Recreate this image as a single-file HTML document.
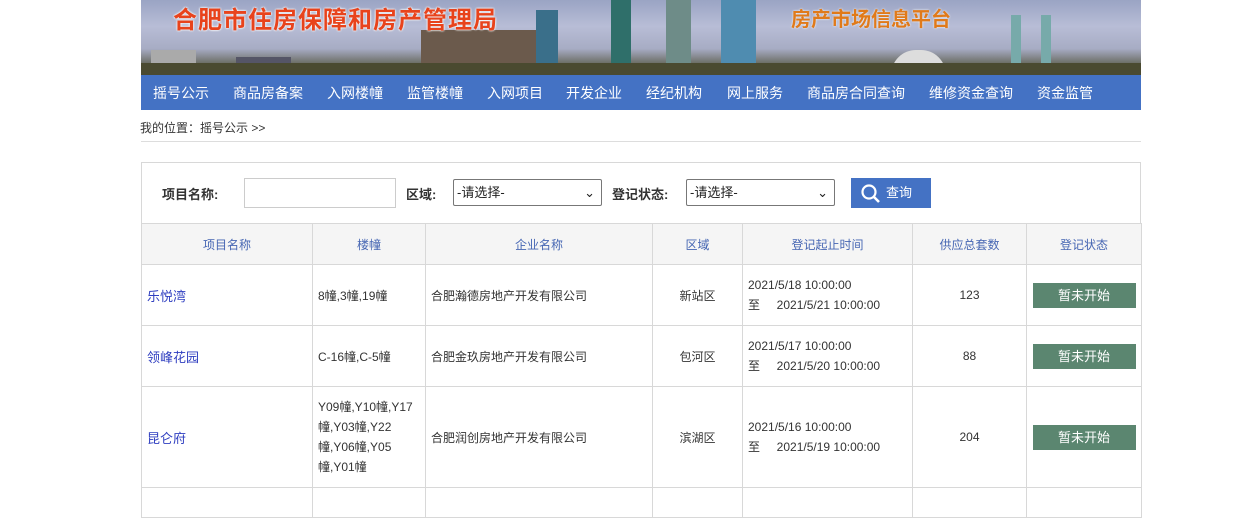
<!DOCTYPE html>
<html><head><meta charset="utf-8"><style>
body{margin:0;background:#fff;font-family:"Liberation Sans","Noto Sans CJK SC",sans-serif;font-size:12px;color:#333;overflow:hidden;height:498px}
.w{position:absolute;left:141px;width:1000px;}
.banner{top:0;height:75px;background:linear-gradient(180deg,#9aa4c4 0%,#b8bdd6 35%,#a7acc4 65%,#6a6c62 85%,#4b4a38 100%);overflow:hidden}
.b{position:absolute;bottom:0;background:#5a7fa0}
.t1{position:absolute;left:32px;top:0;font-size:24px;font-weight:bold;color:#e8431c;letter-spacing:1px;text-shadow:0 0 2px #fff,0 0 2px #fff}
.t2{position:absolute;left:650px;top:3px;font-size:20px;font-weight:bold;color:#e07a1a;text-shadow:0 0 2px #fff}
.nav{top:75px;height:35px;background:#4472c4;color:#fff;font-size:14px}
.nav span{position:absolute;top:8px}
.bc{top:119px;font-size:12px;color:#333;left:140px}
.line{top:141px;height:1px;background:#ddd}
.box{top:162px;height:60px;border:1px solid #d8d8d8;border-bottom:none;width:998px}
table{position:absolute;left:141px;top:223px;border-collapse:collapse;width:1000px;table-layout:fixed}
td,th{border:1px solid #d8d8d8;padding:0 5px}
th{background:#f5f5f5;color:#4666b3;font-weight:normal;height:40px;font-size:12px}
td{font-size:12px;color:#333}
.btn{display:block;margin:0 auto;width:103px;height:25px;line-height:25px;background:#5b8670;color:#fff;text-align:center;font-size:13px}
a{color:#2f3ec0;text-decoration:none;font-size:13px}
.sel{position:absolute;top:16px;width:144px;height:25px;border:1px solid #777;border-radius:2px;font-size:13px;line-height:25px;padding-left:3px;color:#222}
</style></head><body>
<div class="w banner">
<div class="b" style="left:10px;width:45px;height:25px;background:#aaa"></div>
<div class="b" style="left:95px;width:55px;height:18px;background:#556"></div>
<div class="b" style="left:280px;width:120px;height:45px;background:#6b5a4c"></div>
<div class="b" style="left:395px;width:22px;height:65px;background:#3a6f8a"></div>
<div class="b" style="left:470px;width:20px;height:75px;background:#2f6f6a"></div>
<div class="b" style="left:525px;width:25px;height:75px;background:#6e8c88"></div>
<div class="b" style="left:580px;width:35px;height:75px;background:#4f8cb0"></div>
<div class="b" style="left:750px;width:55px;height:25px;background:#ddd;border-radius:30px 30px 0 0"></div>
<div class="b" style="left:870px;width:10px;height:60px;background:#7aa"></div>
<div class="b" style="left:900px;width:10px;height:60px;background:#7aa"></div>
<div class="b" style="left:0;width:1000px;height:12px;background:#4a4a30"></div>
<div class="t1">合肥市住房保障和房产管理局</div>
<div class="t2">房产市场信息平台</div>
</div>
<div class="w nav">
<span style="left:12px">摇号公示</span><span style="left:92px">商品房备案</span><span style="left:186px">入网楼幢</span><span style="left:266px">监管楼幢</span><span style="left:346px">入网项目</span><span style="left:425px">开发企业</span><span style="left:505px">经纪机构</span><span style="left:586px">网上服务</span><span style="left:666px">商品房合同查询</span><span style="left:788px">维修资金查询</span><span style="left:896px">资金监管</span>
</div>
<div class="w bc">我的位置：摇号公示 &gt;&gt;</div>
<div class="w line"></div>
<div class="w box">
<span style="position:absolute;left:20px;top:21px;font-size:13px;font-weight:bold">项目名称:</span>
<div style="position:absolute;left:102px;top:15px;width:150px;height:28px;border:1px solid #ccc"></div>
<span style="position:absolute;left:264px;top:21px;font-size:13px;font-weight:bold">区域:</span>
<div class="sel" style="left:311px">-请选择-<span style="position:absolute;right:6px">⌄</span></div>
<span style="position:absolute;left:470px;top:21px;font-size:13px;font-weight:bold">登记状态:</span>
<div class="sel" style="left:544px">-请选择-<span style="position:absolute;right:6px">⌄</span></div>
<div style="position:absolute;left:709px;top:15px;width:80px;height:30px;background:#4472c4;color:#fff;font-size:13px;line-height:30px">
<svg style="position:absolute;left:9px;top:5px" width="22" height="22" viewBox="0 0 22 22"><circle cx="9" cy="9" r="6.5" fill="none" stroke="#fff" stroke-width="2.2"/><line x1="13.5" y1="13.5" x2="19" y2="19" stroke="#fff" stroke-width="2.6"/></svg>
<span style="position:absolute;left:35px">查询</span></div>
</div>
<table>
<colgroup><col style="width:171px"><col style="width:113px"><col style="width:227px"><col style="width:90px"><col style="width:170px"><col style="width:114px"><col style="width:115px"></colgroup>
<tr><th>项目名称</th><th>楼幢</th><th>企业名称</th><th>区域</th><th>登记起止时间</th><th>供应总套数</th><th>登记状态</th></tr>
<tr style="height:61px"><td><a>乐悦湾</a></td><td>8幢,3幢,19幢</td><td>合肥瀚德房地产开发有限公司</td><td style="text-align:center">新站区</td><td style="line-height:20px">2021/5/18 10:00:00<br>至&nbsp;&nbsp;&nbsp;&nbsp; 2021/5/21 10:00:00</td><td style="text-align:center">123</td><td><span class="btn">暂未开始</span></td></tr>
<tr style="height:61px"><td><a>领峰花园</a></td><td>C-16幢,C-5幢</td><td>合肥金玖房地产开发有限公司</td><td style="text-align:center">包河区</td><td style="line-height:20px">2021/5/17 10:00:00<br>至&nbsp;&nbsp;&nbsp;&nbsp; 2021/5/20 10:00:00</td><td style="text-align:center">88</td><td><span class="btn">暂未开始</span></td></tr>
<tr style="height:101px"><td><a>昆仑府</a></td><td style="line-height:20px">Y09幢,Y10幢,Y17幢,Y03幢,Y22幢,Y06幢,Y05幢,Y01幢</td><td>合肥润创房地产开发有限公司</td><td style="text-align:center">滨湖区</td><td style="line-height:20px">2021/5/16 10:00:00<br>至&nbsp;&nbsp;&nbsp;&nbsp; 2021/5/19 10:00:00</td><td style="text-align:center">204</td><td><span class="btn">暂未开始</span></td></tr>
<tr style="height:30px"><td></td><td></td><td></td><td></td><td></td><td></td><td></td></tr>
</table>
</body></html>
